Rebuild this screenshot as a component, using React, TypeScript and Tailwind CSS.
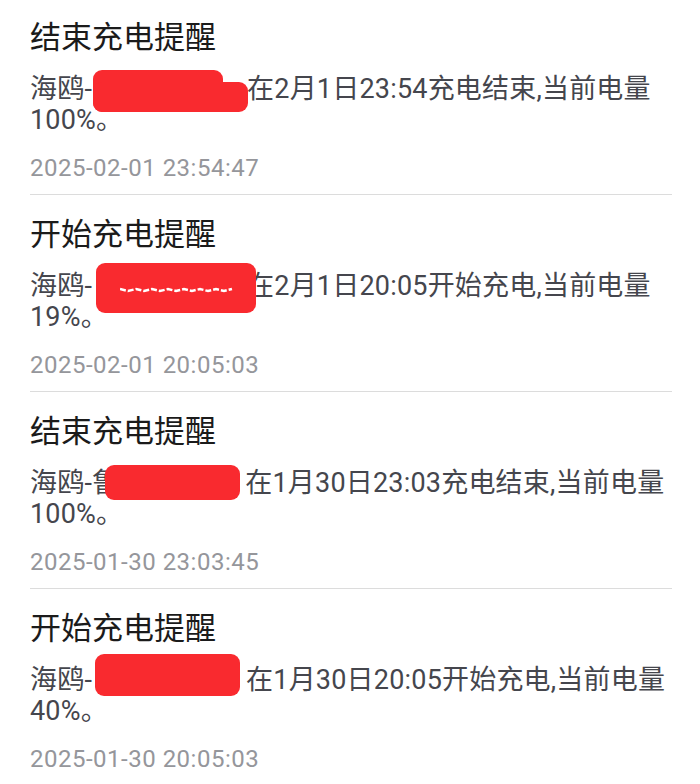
import React from "react";

type Item = {
  title: string;
  prefix: string;
  spacer: number;
  boxes: { left: number; top: number; width: number; height: number }[];
  squiggle?: boolean;
  rest: string;
  line2: string;
  time: string;
};

const items: Item[] = [
  {
    title: "结束充电提醒",
    prefix: "海鸥-",
    spacer: 155,
    boxes: [
      { left: 1, top: -4, width: 130, height: 42 },
      { left: 1, top: 8, width: 155, height: 30 },
    ],
    rest: "在2月1日23:54充电结束,当前电量",
    line2: "100%。",
    time: "2025-02-01 23:54:47",
  },
  {
    title: "开始充电提醒",
    prefix: "海鸥-",
    spacer: 155,
    boxes: [{ left: 4, top: -8, width: 160, height: 50 }],
    squiggle: true,
    rest: "在2月1日20:05开始充电,当前电量",
    line2: "19%。",
    time: "2025-02-01 20:05:03",
  },
  {
    title: "结束充电提醒",
    prefix: "海鸥-鲁",
    spacer: 126,
    boxes: [{ left: -14, top: -3, width: 135, height: 35 }],
    rest: "在1月30日23:03充电结束,当前电量",
    line2: "100%。",
    time: "2025-01-30 23:03:45",
  },
  {
    title: "开始充电提醒",
    prefix: "海鸥-",
    spacer: 154,
    boxes: [{ left: 3, top: -11, width: 145, height: 42 }],
    rest: "在1月30日20:05开始充电,当前电量",
    line2: "40%。",
    time: "2025-01-30 20:05:03",
  },
];

export default function App() {
  return (
    <div
      className="w-[700px] h-[784px] overflow-hidden bg-white"
      style={{ fontFamily: 'Roboto, "Noto Sans CJK SC", sans-serif' }}
    >
      <div className="-mt-[2px] pl-[30px] pr-[28px]">
        {items.map((it, i) => (
          <div key={i} className="border-b border-[#dcdcdc] pt-[20px] pb-[11px]">
            <div className="text-[31px] leading-[40px] text-[#1b1b1b]">{it.title}</div>
            <div className="mt-[16px] text-[27px] leading-[31px] tracking-[0.2px] text-[#45464d]">
              <div className="whitespace-nowrap">
                {it.prefix}
                <span
                  className="relative inline-block align-top h-[31px]"
                  style={{ width: it.spacer }}
                >
                  {it.boxes.map((b, j) => (
                    <span
                      key={j}
                      className="absolute block rounded-[9px] bg-[#f92a2f]"
                      style={{ left: b.left, top: b.top, width: b.width, height: b.height }}
                    />
                  ))}
                  {it.squiggle && (
                    <svg
                      className="absolute left-[28px] top-[15px]"
                      width="114"
                      height="8"
                      viewBox="0 0 114 8"
                    >
                      <path
                        d="M0 3 L8 5 L16 3 L24 5 L32 3 L40 5 L48 3 L56 5 L64 3 L72 5 L80 3 L88 5 L96 3 L104 5 L112 3"
                        stroke="#ffffff"
                        strokeWidth="2.5"
                        strokeDasharray="6 2"
                        fill="none"
                      />
                    </svg>
                  )}
                </span>
                {it.rest}
              </div>
              <div>{it.line2}</div>
            </div>
            <div className="mt-[17px] text-[24px] leading-[30px] tracking-[0.5px] text-[#95969b]">
              {it.time}
            </div>
          </div>
        ))}
      </div>
    </div>
  );
}
